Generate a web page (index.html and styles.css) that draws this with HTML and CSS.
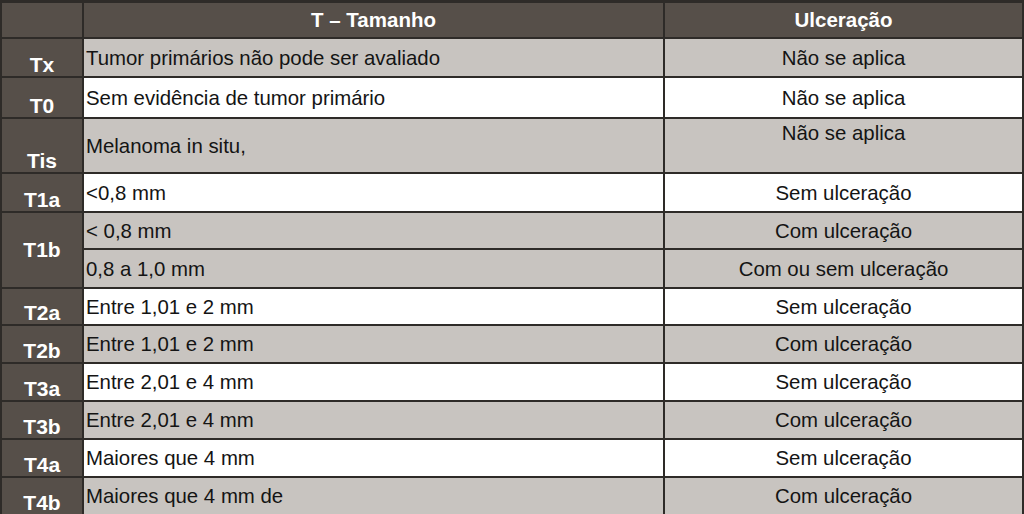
FILE: index.html
```html
<!DOCTYPE html>
<html lang="pt">
<head>
<meta charset="utf-8">
<title>Classificação T</title>
<link rel="stylesheet" href="styles.css">
</head>
<body>
<table class="tbl">
  <colgroup>
    <col class="c1"><col class="c2"><col class="c3">
  </colgroup>
  <thead>
    <tr class="r-head">
      <th class="lab"></th>
      <th>T – Tamanho</th>
      <th>Ulceração</th>
    </tr>
  </thead>
  <tbody>
    <tr class="gray r39"><th class="lab">Tx</th><td class="desc">Tumor primários não pode ser avaliado</td><td class="ulc">Não se aplica</td></tr>
    <tr class="white r41"><th class="lab">T0</th><td class="desc">Sem evidência de tumor primário</td><td class="ulc">Não se aplica</td></tr>
    <tr class="gray r55"><th class="lab">Tis</th><td class="desc">Melanoma in situ,</td><td class="ulc top">Não se aplica</td></tr>
    <tr class="white r39"><th class="lab">T1a</th><td class="desc">&lt;0,8 mm</td><td class="ulc">Sem ulceração</td></tr>
    <tr class="gray r37"><th class="lab mid" rowspan="2">T1b</th><td class="desc">&lt; 0,8 mm</td><td class="ulc">Com ulceração</td></tr>
    <tr class="gray r39"><td class="desc">0,8 a 1,0 mm</td><td class="ulc">Com ou sem ulceração</td></tr>
    <tr class="white r37"><th class="lab">T2a</th><td class="desc">Entre 1,01 e 2 mm</td><td class="ulc">Sem ulceração</td></tr>
    <tr class="gray r38"><th class="lab">T2b</th><td class="desc">Entre 1,01 e 2 mm</td><td class="ulc">Com ulceração</td></tr>
    <tr class="white r38"><th class="lab">T3a</th><td class="desc">Entre 2,01 e 4 mm</td><td class="ulc">Sem ulceração</td></tr>
    <tr class="gray r38"><th class="lab">T3b</th><td class="desc">Entre 2,01 e 4 mm</td><td class="ulc">Com ulceração</td></tr>
    <tr class="white r38"><th class="lab">T4a</th><td class="desc">Maiores que 4 mm</td><td class="ulc">Sem ulceração</td></tr>
    <tr class="gray r38"><th class="lab">T4b</th><td class="desc">Maiores que 4 mm de</td><td class="ulc">Com ulceração</td></tr>
  </tbody>
</table>
</body>
</html>
```
FILE: styles.css
```css
html, body {
  margin: 0;
  padding: 0;
  background: #ffffff;
}
body {
  font-family: "Liberation Sans", Arial, sans-serif;
  color: #141414;
  overflow: hidden;
}
.tbl {
  border-collapse: collapse;
  table-layout: fixed;
  width: 1022px;
  margin-top: 0;
}
.c1 { width: 82px; }
.c2 { width: 581px; }
.c3 { width: 359px; }
.tbl th, .tbl td {
  border: 2px solid #2e2b28;
  padding: 0;
  line-height: 22px;
}
.r-head th {
  background: #564f49;
  color: #ffffff;
  font-size: 20.5px;
  font-weight: bold;
  height: 34px;
  vertical-align: middle;
  text-align: center;
  border-top-width: 3px;
}
.lab {
  background: #564f49;
  color: #ffffff;
  font-size: 21px;
  font-weight: bold;
  text-align: center;
  vertical-align: bottom;
}
.lab.mid {
  vertical-align: middle;
}
.desc {
  font-size: 20.4px;
  text-align: left;
  vertical-align: middle;
}
.tbl .desc {
  padding-left: 2px;
}
.ulc {
  font-size: 20.4px;
  text-align: center;
  vertical-align: middle;
}
.ulc.top {
  vertical-align: top;
  padding-top: 3px;
}
.gray td { background: #c8c4c0; }
.white td { background: #ffffff; }
.r37 { height: 37px; }
.r38 { height: 38px; }
.r39 { height: 39px; }
.r41 { height: 41px; }
.r55 { height: 55px; }
```
